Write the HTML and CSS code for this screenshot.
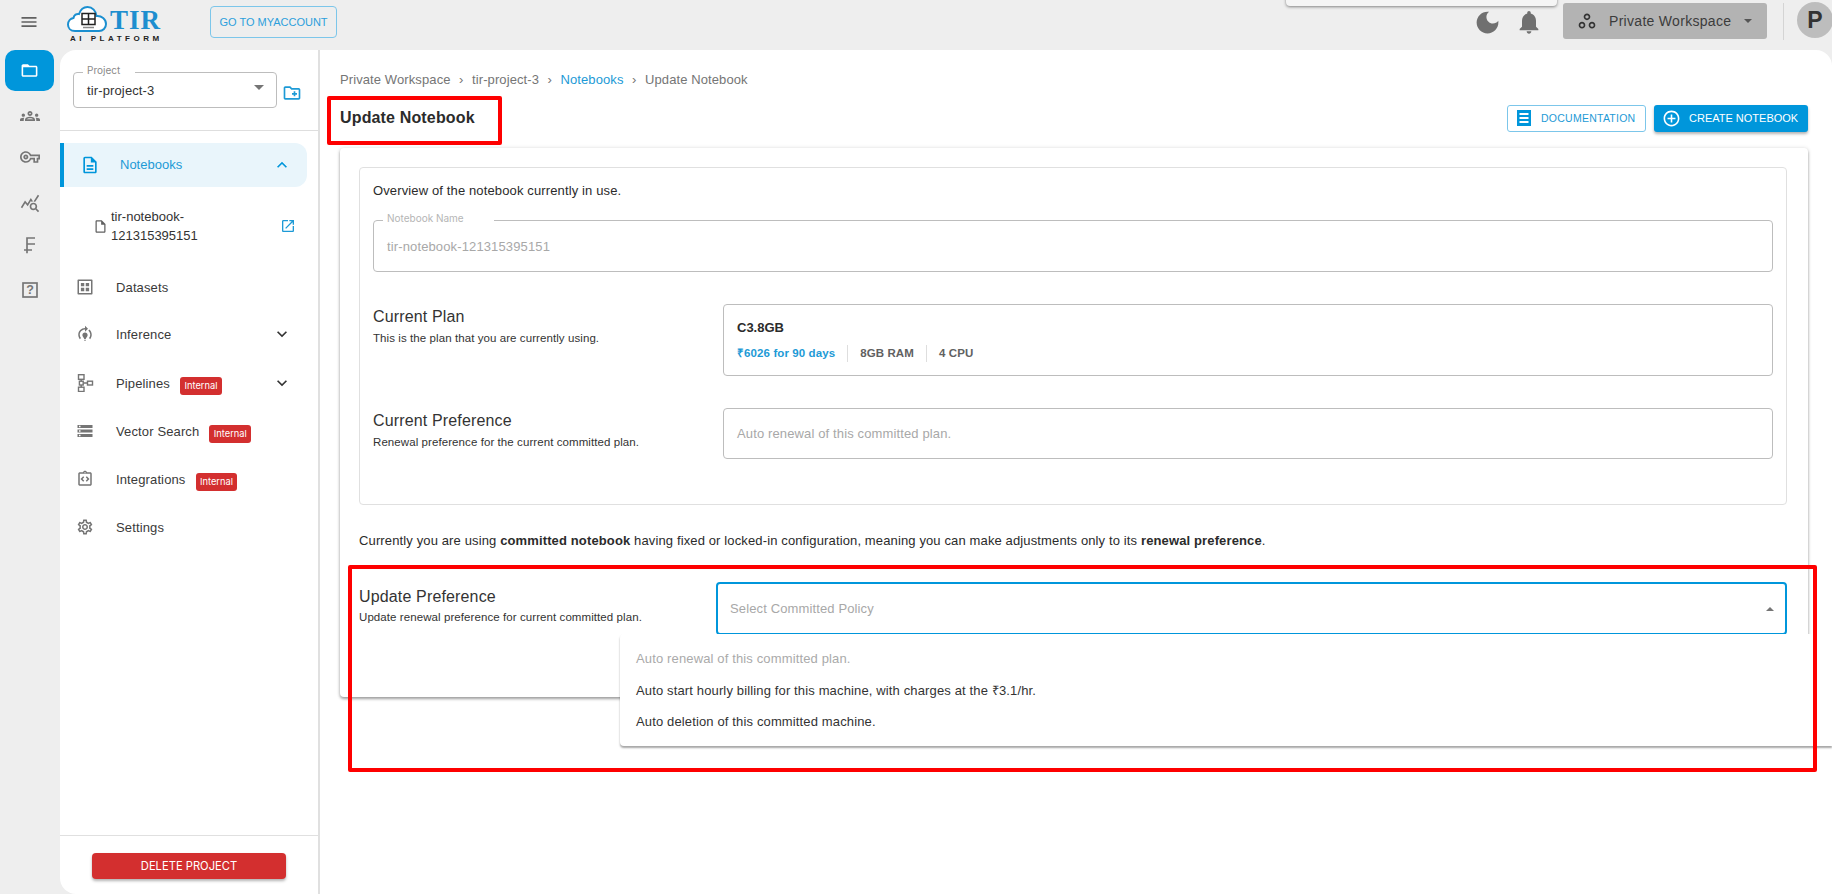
FILE: index.html
```html
<!DOCTYPE html>
<html lang="en">
<head>
<meta charset="utf-8">
<title>Update Notebook</title>
<link rel="stylesheet" href="styles.css">
</head>
<body>
<div class="app">
  <header class="topbar">
    <div class="tb-left">
      <button class="menu-btn" aria-label="menu">
        <svg viewBox="0 0 24 24" class="ic24"><path d="M3 18h18v-2H3v2zm0-5h18v-2H3v2zm0-7v2h18V6H3z"/></svg>
      </button>
      <div class="logo">
        <svg class="logo-cloud" viewBox="0 0 40 26">
          <path class="lc-outline" d="M8 25C3.500 25 1 22 1 18.500 1 15 3.500 12.500 6.500 12 7 9 9.500 7.500 12 8 13.500 3.500 17 1 20.500 1 25.500 1 29 5 29.500 10 34.500 9.500 39 13 39 18 39 22 36 25 32 25z"/>
          <path class="lc-window" d="M15 7.500h13v11H15zM21.500 7.500v11M15 13h13"/>
          <path class="lc-tiny" d="M16 21.500h11"/>
        </svg>
        <span class="logo-tir">TIR</span>
        <span class="logo-sub">AI PLATFORM</span>
      </div>
      <a class="account-btn">GO TO MYACCOUNT</a>
    </div>
    <div class="tb-right">
      <svg viewBox="0 0 24 24" class="ic-moon"><path d="M12 3c-4.970 0-9 4.030-9 9s4.030 9 9 9 9-4.030 9-9c0-.46-.04-.92-.1-1.360-.98 1.370-2.580 2.260-4.400 2.260-2.980 0-5.400-2.420-5.400-5.400 0-1.810.89-3.420 2.260-4.400-.44-.06-.9-.1-1.360-.1z"/></svg>
      <svg viewBox="0 0 24 24" class="ic-bell"><path d="M12 22c1.100 0 2-.9 2-2h-4c0 1.100.9 2 2 2zm6-6v-5c0-3.070-1.630-5.640-4.500-6.320V4c0-.83-.67-1.500-1.500-1.500s-1.500.67-1.500 1.500v.68C7.640 5.360 6 7.920 6 11v5l-2 2v1h16v-1l-2-2z"/></svg>
      <div class="ws-btn">
        <svg viewBox="0 0 24 24" class="ic-ws"><path d="M6 13c-2.200 0-4 1.800-4 4s1.800 4 4 4 4-1.800 4-4-1.800-4-4-4zm0 6c-1.100 0-2-.9-2-2s.9-2 2-2 2 .9 2 2-.9 2-2 2zm6-16C9.800 3 8 4.800 8 7s1.800 4 4 4 4-1.800 4-4-1.800-4-4-4zm0 6c-1.100 0-2-.9-2-2s.9-2 2-2 2 .9 2 2-.9 2-2 2zm6 4c-2.200 0-4 1.800-4 4s1.800 4 4 4 4-1.800 4-4-1.800-4-4-4zm0 6c-1.100 0-2-.9-2-2s.9-2 2-2 2 .9 2 2-.9 2-2 2z"/></svg>
        <span>Private Workspace</span>
        <i class="caret-down"></i>
      </div>
      <div class="tb-divider"></div>
      <div class="avatar">P</div>
    </div>
    <div class="top-popup"></div>
  </header>

  <div class="body-row">
    <nav class="rail">
      <a class="rail-item active"><svg viewBox="0 0 24 24"><path d="M20 6h-8l-2-2H4c-1.100 0-1.990.9-1.990 2L2 18c0 1.100.9 2 2 2h16c1.100 0 2-.9 2-2V8c0-1.100-.9-2-2-2zm0 12H4V8h16v10z"/></svg></a>
      <a class="rail-item"><svg viewBox="0 0 24 24"><path d="M4 13c1.100 0 2-.9 2-2s-.9-2-2-2-2 .9-2 2 .9 2 2 2zm1.130 1.100c-.37-.06-.74-.1-1.130-.1-.99 0-1.930.21-2.780.58C.48 14.900 0 15.620 0 16.430V18h4.500v-1.610c0-.83.23-1.610.63-2.290zM20 13c1.100 0 2-.9 2-2s-.9-2-2-2-2 .9-2 2 .9 2 2 2zm4 3.430c0-.81-.48-1.530-1.220-1.850-.85-.37-1.790-.58-2.780-.58-.39 0-.76.04-1.130.1.4.68.63 1.460.63 2.290V18H24v-1.570zm-7.760-2.780c-1.170-.52-2.610-.9-4.240-.9-1.630 0-3.070.39-4.240.9C6.680 14.130 6 15.210 6 16.390V18h12v-1.610c0-1.180-.68-2.260-1.760-2.740zM8.070 16c.09-.23.13-.39.91-.69.97-.38 1.990-.56 3.020-.56s2.050.18 3.020.56c.77.3.81.46.91.69H8.070zM12 8c.55 0 1 .45 1 1s-.45 1-1 1-1-.45-1-1 .45-1 1-1m0-2c-1.660 0-3 1.340-3 3s1.340 3 3 3 3-1.340 3-3-1.340-3-3-3z"/></svg></a>
      <a class="rail-item"><svg viewBox="0 0 24 24"><path d="M22 19h-6v-4h-2.680c-1.140 2.420-3.600 4-6.320 4-3.860 0-7-3.140-7-7s3.140-7 7-7c2.720 0 5.170 1.580 6.320 4H24v6h-2v4zm-4-2h2v-4h2v-2H11.940l-.23-.67C11.010 8.340 9.110 7 7 7c-2.760 0-5 2.240-5 5s2.240 5 5 5c2.110 0 4.010-1.340 4.710-3.330l.23-.67H18v4zM7 15c-1.650 0-3-1.350-3-3s1.350-3 3-3 3 1.350 3 3-1.350 3-3 3zm0-4c-.55 0-1 .45-1 1s.45 1 1 1 1-.45 1-1-.45-1-1-1z"/></svg></a>
      <a class="rail-item"><svg viewBox="0 0 24 24"><path d="M19.880 18.470c.44-.7.7-1.510.7-2.390 0-2.490-2.010-4.500-4.500-4.500s-4.500 2.010-4.500 4.500 2.010 4.500 4.490 4.500c.88 0 1.700-.26 2.390-.7L21.580 23 23 21.580l-3.120-3.110zm-3.800.11c-1.380 0-2.500-1.120-2.500-2.500s1.120-2.500 2.500-2.500 2.500 1.120 2.500 2.500-1.120 2.500-2.500 2.500zm-.36-8.500c-.74.02-1.450.18-2.100.45l-.55-.83-3.800 6.180-3.010-3.520-3.630 5.810L1 17l5-8 3 3.500L13 6l2.720 4.080zm2.590.5c-.64-.28-1.330-.45-2.050-.49L21.380 2 23 3.180l-4.690 7.400z"/></svg></a>
      <a class="rail-item"><svg viewBox="0 0 24 24" class="line"><path d="M8.400 22V3.600H18M8.400 10.800H18M4.800 18H14.400"/></svg></a>
      <a class="rail-item"><svg viewBox="0 0 24 24" class="line"><rect x="3.600" y="3.600" width="16.800" height="16.800"/><text x="12" y="17" text-anchor="middle" class="q-mark">?</text></svg></a>
    </nav>

    <div class="surface">
      <aside class="sidebar">
        <div class="project-row">
          <div class="project-select">
            <span class="fs-label">Project</span>
            <span>tir-project-3</span>
            <i class="caret-down grey"></i>
          </div>
          <svg viewBox="0 0 24 24" class="ic-addfolder"><path d="M20 6h-8l-2-2H4c-1.110 0-1.990.89-1.990 2L2 18c0 1.110.89 2 2 2h16c1.110 0 2-.89 2-2V8c0-1.110-.89-2-2-2zm0 12H4V6h5.170l2 2H20v10zm-8-4h2v2h2v-2h2v-2h-2v-2h-2v2h-2z"/></svg>
        </div>
        <div class="side-nav">
          <a class="nav-active">
            <svg viewBox="0 0 24 24" class="ic-nav blue"><path d="M8 16h8v2H8zm0-4h8v2H8zm6-10H6c-1.100 0-2 .9-2 2v16c0 1.100.89 2 1.990 2H18c1.100 0 2-.9 2-2V8l-6-6zm4 18H6V4h7v5h5v11z"/></svg>
            <span class="nav-label">Notebooks</span>
            <svg viewBox="0 0 24 24" class="chev blue"><path d="M12 8l-6 6 1.410 1.410L12 10.830l4.590 4.580L18 14z"/></svg>
          </a>
          <div class="nav-sub">
            <svg viewBox="0 0 24 24" class="ic-file"><path d="M14 2H6c-1.100 0-1.990.9-1.990 2L4 20c0 1.100.89 2 1.990 2H18c1.100 0 2-.9 2-2V8l-6-6zM6 20V4h7v5h5v11H6z"/></svg>
            <span class="sub-text">tir-notebook-<br>121315395151</span>
            <svg viewBox="0 0 24 24" class="ic-open"><path d="M19 19H5V5h7V3H5c-1.110 0-2 .9-2 2v14c0 1.100.89 2 2 2h14c1.100 0 2-.9 2-2v-7h-2v7zM14 3v2h3.590l-9.830 9.830 1.410 1.410L19 6.410V10h2V3h-7z"/></svg>
          </div>
          <a class="nav-item i1">
            <svg viewBox="0 0 24 24" class="ic-nav"><path fill-rule="evenodd" d="M3 2h18a1 1 0 0 1 1 1v18a1 1 0 0 1-1 1H3a1 1 0 0 1-1-1V3a1 1 0 0 1 1-1zm1 2v16h16V4zm2.500 2.500h4.500V11H6.500zm6.500 0h4.500V11H13zM6.500 13H11v4.500H6.500zm6.500 0h4.500v4.500H13z"/></svg>
            <span>Datasets</span>
          </a>
          <a class="nav-item i2">
            <svg viewBox="0 0 24 24" class="ic-nav"><path d="M15.500 13.500c0 2-2.500 3.500-2.500 5h-2c0-1.500-2.500-3-2.500-5 0-1.930 1.570-3.500 3.500-3.500s3.500 1.570 3.500 3.500zm-2.500 6h-2V21h2v-1.500zm6-6.500c0 1.680-.59 3.210-1.580 4.420l1.420 1.420C20.180 17.260 21 15.220 21 13c0-2.740-1.230-5.190-3.160-6.840l-1.420 1.420C17.990 8.860 19 10.820 19 13zM16 5l-4-4v3c-4.970 0-9 4.030-9 9 0 2.220.82 4.260 2.160 5.840l1.420-1.420C5.590 16.210 5 14.680 5 13c0-3.860 3.140-7 7-7v3l4-4z"/></svg>
            <span>Inference</span>
            <svg viewBox="0 0 24 24" class="chev dark"><path d="M16.590 8.590L12 13.170 7.410 8.590 6 10l6 6 6-6z"/></svg>
          </a>
          <a class="nav-item i3">
            <svg viewBox="0 0 18 18" class="ic-nav line"><rect x="2.500" y=".7" width="5.500" height="4.600"/><path d="M5.200 5.300v2M5.200 11v2.200M7.500 9h4"/><rect x="3.400" y="7.200" width="3.800" height="3.800"/><rect x="2.500" y="13.200" width="5.500" height="4.300"/><rect x="11.500" y="7.200" width="5" height="3.800"/></svg>
            <span>Pipelines</span>
            <b class="badge">Internal</b>
            <svg viewBox="0 0 24 24" class="chev dark"><path d="M16.590 8.590L12 13.170 7.410 8.590 6 10l6 6 6-6z"/></svg>
          </a>
          <a class="nav-item i4">
            <svg viewBox="0 0 24 24" class="ic-nav"><path d="M2 20h20v-4H2v4zm2-3h2v2H4v-2zM2 4v4h20V4H2zm4 3H4V5h2v2zm-4 7h20v-4H2v4zm2-3h2v2H4v-2z"/></svg>
            <span>Vector Search</span>
            <b class="badge">Internal</b>
          </a>
          <a class="nav-item i5">
            <svg viewBox="0 0 24 24" class="ic-nav"><path d="M11 14.170 8.830 12 11 9.830 9.590 8.410 6 12l3.590 3.590zm3.410 1.420L18 12l-3.590-3.590L13 9.830 15.170 12 13 14.170zM19 3h-4.180C14.400 1.840 13.300 1 12 1s-2.400.84-2.820 2H5c-.14 0-.27.01-.4.04-.39.08-.74.28-1.010.55-.18.18-.33.4-.43.64-.1.23-.16.49-.16.77v14c0 .27.06.54.16.78.1.24.25.45.43.64.27.27.62.47 1.010.55.13.02.26.03.4.03h14c1.100 0 2-.9 2-2V5c0-1.100-.9-2-2-2zm-7-.25c.41 0 .75.34.75.75s-.34.75-.75.75-.75-.34-.75-.75.34-.75.75-.75zM19 19H5V5h14v14z"/></svg>
            <span>Integrations</span>
            <b class="badge">Internal</b>
          </a>
          <a class="nav-item i6">
            <svg viewBox="0 0 24 24" class="ic-nav"><path d="M19.430 12.980c.04-.32.07-.64.07-.98 0-.34-.03-.66-.07-.98l2.110-1.650c.19-.15.24-.42.12-.64l-2-3.460c-.09-.16-.26-.25-.44-.25-.06 0-.12.01-.17.03l-2.490 1c-.52-.4-1.080-.73-1.690-.98l-.38-2.650C14.460 2.180 14.250 2 14 2h-4c-.25 0-.46.18-.49.42l-.38 2.650c-.61.25-1.170.59-1.690.98l-2.490-1c-.06-.02-.12-.03-.18-.03-.17 0-.34.09-.43.25l-2 3.460c-.13.22-.07.49.12.64l2.110 1.650c-.04.32-.07.65-.07.98 0 .33.03.66.07.98l-2.110 1.650c-.19.15-.24.42-.12.64l2 3.460c.09.16.26.25.44.25.06 0 .12-.01.17-.03l2.490-1c.52.4 1.080.73 1.690.98l.38 2.650c.03.24.24.42.49.42h4c.25 0 .46-.18.49-.42l.38-2.650c.61-.25 1.170-.59 1.690-.98l2.490 1c.06.02.12.03.18.03.17 0 .34-.09.43-.25l2-3.460c.12-.22.07-.49-.12-.64l-2.110-1.650zm-1.980-1.710c.04.31.05.52.05.73 0 .21-.02.43-.05.73l-.14 1.130.89.7 1.080.84-.7 1.210-1.270-.51-1.040-.42-.9.68c-.43.32-.84.56-1.250.73l-1.060.43-.16 1.130-.2 1.350h-1.400l-.19-1.350-.16-1.130-1.060-.43c-.43-.18-.83-.41-1.230-.71l-.91-.7-1.060.43-1.270.51-.7-1.210 1.080-.84.89-.7-.14-1.130c-.03-.31-.05-.54-.05-.74s.02-.43.05-.73l.14-1.130-.89-.7-1.080-.84.7-1.210 1.270.51 1.040.42.9-.68c.43-.32.84-.56 1.250-.73l1.060-.43.16-1.130.2-1.350h1.390l.19 1.350.16 1.130 1.060.43c.43.18.83.41 1.230.71l.91.7 1.060-.43 1.270-.51.7 1.210-1.070.85-.89.7.14 1.130zM12 8c-2.210 0-4 1.790-4 4s1.790 4 4 4 4-1.790 4-4-1.790-4-4-4zm0 6c-1.100 0-2-.9-2-2s.9-2 2-2 2 .9 2 2-.9 2-2 2z"/></svg>
            <span>Settings</span>
          </a>
        </div>
        <div class="side-foot"><a class="delete-btn">DELETE PROJECT</a></div>
      </aside>

      <main class="content">
        <div class="crumbs">
          <span>Private Workspace</span><i>›</i><span>tir-project-3</span><i>›</i><span class="crumb-link">Notebooks</span><i>›</i><span>Update Notebook</span>
        </div>
        <div class="head-row">
          <h1>Update Notebook</h1>
          <div class="head-actions">
            <a class="btn-outline">
              <svg viewBox="0 0 14 16" class="ic-doc"><path fill-rule="evenodd" d="M0 0h14v16H0zM2.500 3v2h9V3zm0 4v2h9V7zm0 4v2h9v-2z"/></svg>
              DOCUMENTATION
            </a>
            <a class="btn-solid">
              <svg viewBox="0 0 24 24" class="ic-add"><path d="M13 7h-2v4H7v2h4v4h2v-4h4v-2h-4V7zm-1-5C6.480 2 2 6.480 2 12s4.480 10 10 10 10-4.480 10-10S17.520 2 12 2zm0 18c-4.410 0-8-3.590-8-8s3.590-8 8-8 8 3.590 8 8-3.590 8-8 8z"/></svg>
              CREATE NOTEBOOK
            </a>
          </div>
        </div>

        <section class="paper">
          <div class="overview">
            <p class="ov-text">Overview of the notebook currently in use.</p>
            <div class="field name-field">
              <span class="fs-label light">Notebook Name</span>
              <span class="muted">tir-notebook-121315395151</span>
            </div>
            <div class="row plan-row">
              <div class="row-text">
                <h2>Current Plan</h2>
                <p>This is the plan that you are currently using.</p>
              </div>
              <div class="field plan-box">
                <strong>C3.8GB</strong>
                <div class="plan-meta">
                  <span class="price">₹6026 for 90 days</span>
                  <span>8GB RAM</span>
                  <span>4 CPU</span>
                </div>
              </div>
            </div>
            <div class="row pref-row">
              <div class="row-text">
                <h2>Current Preference</h2>
                <p>Renewal preference for the current committed plan.</p>
              </div>
              <div class="field pref-box"><span class="muted">Auto renewal of this committed plan.</span></div>
            </div>
          </div>
          <p class="note">Currently you are using <b>committed notebook</b> having fixed or locked-in configuration, meaning you can make adjustments only to its <b>renewal preference</b>.</p>
          <div class="row update-row">
            <div class="row-text">
              <h2>Update Preference</h2>
              <p>Update renewal preference for current committed plan.</p>
            </div>
            <div class="select-open">
              <span class="muted">Select Committed Policy</span>
              <i class="caret-up"></i>
            </div>
          </div>
        </section>
      </main>
    </div>
  </div>

  <ul class="menu">
    <li class="disabled">Auto renewal of this committed plan.</li>
    <li>Auto start hourly billing for this machine, with charges at the ₹3.1/hr.</li>
    <li>Auto deletion of this committed machine.</li>
  </ul>
  <div class="mark mark-title"></div>
  <div class="mark mark-update"></div>
</div>
</body>
</html>
```
FILE: styles.css
```css
* { box-sizing: border-box; }
html, body { margin: 0; height: 100%; overflow: hidden; }
body { font-family: "Liberation Sans", Arial, sans-serif; color: #2b2b2b; background: #eeeeee; }
a { color: inherit; text-decoration: none; }
h1, h2, p, ul { margin: 0; padding: 0; }
svg { display: block; flex: none; }

.app { position: relative; width: 1832px; height: 894px; display: flex; flex-direction: column; }

/* top bar */
.topbar { height: 50px; flex: none; display: flex; justify-content: space-between; background: #eeeeee; position: relative; }
.tb-left { display: flex; align-items: flex-start; }
.menu-btn { width: 58px; height: 44px; padding: 0; border: 0; background: none; display: flex; align-items: center; justify-content: center; }
.ic24 { width: 20px; height: 20px; fill: #616161; }
.logo { width: 142px; height: 50px; position: relative; margin-left: 9px; }
.logo-cloud { position: absolute; left: 0; top: 6px; width: 40px; height: 26px; }
.lc-outline { fill: #fff; stroke: #1b8fd0; stroke-width: 2; }
.lc-window { fill: none; stroke: #222; stroke-width: 1.500; }
.lc-tiny { stroke: #8a8a8a; stroke-width: 1.500; }
.logo-tir { position: absolute; left: 43px; top: 5px; font: bold 27px/30px "Liberation Serif", serif; color: #1d8ecf; letter-spacing: 1px; }
.logo-sub { position: absolute; left: 3px; top: 34px; font: bold 8px/9px "Liberation Sans", sans-serif; letter-spacing: 3.500px; color: #222; white-space: nowrap; }
.account-btn { margin: 6px 0 0 1px; width: 127px; height: 32px; display: flex; align-items: center; justify-content: center; font-size: 11px; color: #2c9fdc; border: 1px solid #7cc6ea; border-radius: 4px; }
.tb-right { display: flex; align-items: flex-start; padding-top: 3px; }
.ic-moon { width: 29px; height: 29px; fill: #707070; margin: 4.500px 14px 0 0; }
.ic-bell { width: 28px; height: 28px; fill: #707070; margin: 5px 20.500px 0 -1px; }
.ws-btn { width: 204px; height: 36px; background: #b3b3b3; border-radius: 3px; display: flex; align-items: center; font-size: 14px; color: #3c3c3c; padding-left: 14px; letter-spacing: .3px; }
.ic-ws { width: 20px; height: 20px; fill: #333; margin-right: 12px; }
.caret-down { display: block; width: 0; height: 0; border: 4px solid transparent; border-top: 4.500px solid #555; border-bottom: 0; margin-left: 13px; }
.tb-divider { width: 1px; height: 37px; background: #d4d4d4; margin: 0 13px 0 16px; }
.avatar { width: 36px; height: 36px; border-radius: 50%; background: #bdbdbd; margin-top: -1px; font: bold 23px/36px "Liberation Sans", sans-serif; text-align: center; color: #333; flex: none; margin-right: -1px; }
.top-popup { position: absolute; left: 1286px; top: -6px; width: 271px; height: 12px; background: #f5f5f5; border-radius: 4px; box-shadow: 0 1px 3px rgba(0,0,0,.45); }

/* layout */
.body-row { flex: 1; display: flex; min-height: 0; }
.rail { width: 60px; flex: none; display: flex; flex-direction: column; align-items: flex-start; padding-left: 5px; }
.rail-item { width: 49px; height: 41px; border-radius: 10px; display: flex; align-items: center; justify-content: center; }
.rail-item svg { width: 20px; height: 20px; fill: #757575; }
.rail-item svg.line { fill: none; stroke: #757575; stroke-width: 2; }
.q-mark { font: bold 15px "Liberation Sans", sans-serif; fill: #757575; stroke: none; }
.rail-item.active { background: #0096db; }
.rail-item.active svg { fill: #fff; width: 19px; height: 19px; }
.rail-item:nth-child(2) { margin-top: 4.500px; }
.rail-item:nth-child(4) { margin-top: 5px; }
.rail-item:nth-child(5) { margin-top: 1px; }
.rail-item:nth-child(6) { margin-top: 4px; }
.surface { flex: 1; display: flex; background: #fff; border-radius: 16px 16px 0 16px; overflow: hidden; min-width: 0; }

/* sidebar */
.sidebar { width: 260px; flex: none; display: flex; flex-direction: column; border-right: 2px solid #e0e0e0; }
.project-row { height: 81px; flex: none; border-bottom: 1px solid #dedede; display: flex; align-items: flex-start; padding: 22px 0 0 13px; }
.project-select { position: relative; width: 204px; height: 36px; border: 1px solid #bdbdbd; border-radius: 4px; display: flex; align-items: center; justify-content: space-between; padding: 0 12px 0 13px; font-size: 13px; letter-spacing: .13px; color: #333; }
.caret-down.grey { border-top-color: #757575; border-width: 5.500px 5px 0; margin: -6px 0 0 0; }
.fs-label { position: absolute; left: 9px; top: -9px; height: 12px; background: linear-gradient(#fff0 0 8px, #fff 8px); padding: 0 15px 0 4px; font: 10px/12px Inter, sans-serif; letter-spacing: 0; color: #8a8a8a; }
.fs-label.light { color: #b5b5b5; padding: 0 30px 0 4px; }
.ic-addfolder { width: 20px; height: 20px; fill: #1d9ad6; margin: 11px 0 0 5px; }
.side-nav { flex: 1; padding-top: 12px; font-size: 13px; color: #3a3a3a; }
.nav-active { height: 44px; width: 247px; display: flex; align-items: center; background: #e9f5fb; border-left: 4px solid #0096db; border-radius: 0 12px 12px 0; padding-left: 16px; color: #1d9ad6; }
.ic-nav { width: 18px; height: 18px; fill: #757575; }
.ic-nav.blue { fill: #0096db; width: 20px; height: 20px; }
.ic-nav.line { fill: none; stroke: #757575; stroke-width: 1.400; }
.nav-label { margin-left: 20px; flex: 1; padding-bottom: 2px; }
.chev { width: 20px; height: 20px; margin-right: 15px; fill: #333; }
.chev.blue { fill: #0096db; }
.nav-sub { display: flex; align-items: center; height: 56px; margin-top: 11px; padding-left: 33px; font-size: 13px; line-height: 19px; color: #333; }
.ic-file { width: 15px; height: 15px; fill: #616161; margin-right: 3px; }
.sub-text { flex: 1; }
.ic-open { width: 16px; height: 16px; fill: #1d9ad6; margin-right: 22px; }
.nav-item { display: flex; align-items: center; height: 24px; padding-left: 16px; position: relative; letter-spacing: .13px; }
.nav-item > span { margin-left: 22px; }
.nav-item .chev { position: absolute; right: 26px; top: 2px; margin: 0; }
.i1 { margin-top: 21px; }
.i2 { margin-top: 23px; }
.i3 { margin-top: 25px; }
.i4 { margin-top: 24px; }
.i5 { margin-top: 24px; }
.i6 { margin-top: 24px; }
.badge { display: inline-block; font: 400 9.300px/18px Inter, sans-serif; letter-spacing: 0; height: 18px; background: #d32f2f; color: #fff; padding: 0 4.500px; border-radius: 3px; margin: 5px 0 0 10px; }
.side-foot { height: 59px; flex: none; border-top: 1px solid #e0e0e0; display: flex; justify-content: center; padding-top: 17px; }
.delete-btn { width: 194px; height: 26px; background: #d32f2f; color: #fff; border-radius: 4px; font: 400 11.200px/26px Inter, sans-serif; text-align: center; box-shadow: 0 2px 3px rgba(0,0,0,.3); }

/* main */
.content { flex: 1; min-width: 0; padding: 22px 24px 0 20px; }
.crumbs { display: flex; align-items: center; height: 14px; font-size: 13px; letter-spacing: .1px; color: #757575; }
.crumbs i { font-style: normal; margin: 0 8.500px; color: #757575; }
.crumb-link { color: #1d9ad6; }
.head-row { display: flex; justify-content: space-between; align-items: center; margin-top: 16px; height: 32px; }
h1 { font-size: 16px; font-weight: 700; color: #2b2b2b; letter-spacing: .15px; }
.head-actions { display: flex; gap: 8px; }
.btn-outline, .btn-solid { height: 27px; display: flex; align-items: center; border-radius: 3px; }
.btn-outline { width: 139px; padding-left: 9px; border: 1px solid #7cc6ea; color: #1d9ad6; font-size: 10.500px; letter-spacing: .25px; }
.ic-doc { width: 14px; height: 16px; fill: #0096db; margin-right: 10px; }
.btn-solid { width: 154px; padding-left: 7.500px; background: #0096db; color: #fff; font-size: 11px; box-shadow: 0 2px 3px rgba(0,0,0,.3); }
.ic-add { width: 19px; height: 19px; fill: #fff; margin-right: 8.500px; }
.paper { margin-top: 14px; height: 549px; background: #fff; border-radius: 4px; box-shadow: 0 2px 3px rgba(0,0,0,.35), 0 0 4px rgba(0,0,0,.12); padding: 19px 21px 0 19px; }
.overview { height: 338px; border: 1px solid #e0e0e0; border-radius: 4px; padding: 15px 13px 0 13px; }
.ov-text { font-size: 13px; line-height: 16px; letter-spacing: .13px; }
.field { position: relative; border: 1px solid #bdbdbd; border-radius: 4px; display: flex; align-items: center; padding: 0 13px; font-size: 13px; }
.name-field { height: 52px; margin-top: 21px; }
.muted { color: #a8a8a8; letter-spacing: .13px; }
.row { display: flex; }
.row-text { width: 350px; flex: none; }
.row-text h2 { font-size: 16px; font-weight: 400; line-height: 20px; color: #333; letter-spacing: .15px; }
.row-text p { font-size: 11.500px; line-height: 13px; margin-top: 5px; color: #333; letter-spacing: .08px; }
.plan-row { margin-top: 32px; }
.plan-row .row-text { padding-top: 3px; }
.plan-box { flex: 1; height: 72px; display: block; padding-top: 15px; }
.plan-box strong { display: block; font-size: 13px; line-height: 16px; color: #2b2b2b; font-weight: 700; }
.plan-meta { display: flex; align-items: center; margin-top: 9px; font-size: 11.500px; letter-spacing: .1px; font-weight: 700; color: #616161; }
.plan-meta span { height: 17px; line-height: 17px; padding: 0 12px; border-right: 1px solid #dedede; }
.plan-meta span:first-child { padding-left: 0; }
.plan-meta span:last-child { border: 0; }
.price { color: #1d9ad6; }
.pref-row { margin-top: 32px; }
.pref-row .row-text { padding-top: 3px; }
.pref-box { flex: 1; height: 51px; }
.note { font-size: 13px; line-height: 16px; margin-top: 28px; letter-spacing: .13px; }
.update-row { margin-top: 33px; }
.update-row .row-text { width: 357px; padding-top: 5px; }
.update-row .row-text p { margin-top: 4px; }
.select-open { flex: 1; height: 53px; border: 2px solid #0096db; border-radius: 4px; display: flex; align-items: center; justify-content: space-between; padding: 0 11px 0 12px; font-size: 13px; }
.caret-up { display: block; width: 0; height: 0; border: 4px solid transparent; border-bottom: 4.500px solid #757575; border-top: 0; }

/* overlays */
.menu { position: absolute; left: 620px; top: 634px; right: 0; height: 112px; background: #fff; list-style: none; padding: 9px 0 0 16px; font-size: 13px; letter-spacing: .14px; color: #333; border-radius: 4px 0 0 4px; box-shadow: 0 2px 2px rgba(0,0,0,.35); }
.menu li { height: 31px; line-height: 32px; }
.menu li:first-child { height: 32px; }
.menu li.disabled { color: #aaa; }
.mark { position: absolute; border: 4px solid #fe0000; border-radius: 2px; pointer-events: none; }
.mark-title { left: 327px; top: 96px; width: 175px; height: 49px; }
.mark-update { left: 347.500px; top: 565px; width: 1469.500px; height: 207px; }
```
